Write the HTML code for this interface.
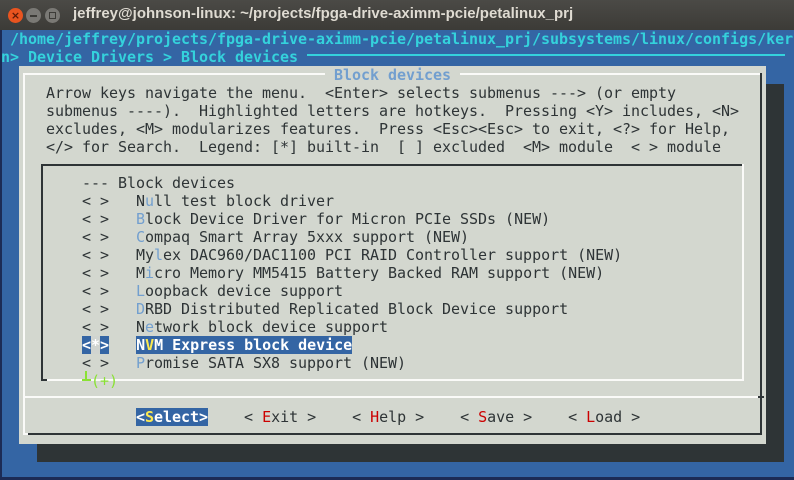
<!DOCTYPE html>
<html><head><meta charset="utf-8"><style>
*{margin:0;padding:0}
body{width:794px;height:480px;overflow:hidden;background:#3465a4;position:relative;font-family:"DejaVu Sans Mono","Liberation Mono",monospace;font-size:15px;}
.a{position:absolute}
.r{position:absolute;white-space:pre;line-height:18px;height:18px;letter-spacing:-0.03px;color:#2e3436}
.c{color:#34d2dc;font-weight:bold}
.h{color:#5c8fd0}
.hb{color:#729fcf}
.red{color:#cc0000}
.sel{background:#3465a4;color:#fff;font-weight:bold}
.y{color:#fce94f}
</style></head><body>
<!-- title bar -->
<div class="a" style="left:0;top:0;width:794px;height:30px;background:linear-gradient(#4b4a46,#3c3b37)"></div>
<div class="a" style="left:8px;top:8px;width:15px;height:15px;border-radius:50%;background:#e9541f;color:#5a1a08;font:bold 11px 'DejaVu Sans',sans-serif;text-align:center;line-height:15px">×</div>
<div class="a" style="left:26px;top:8px;width:15px;height:15px;border-radius:50%;background:#7a7975"><div class="a" style="left:4px;top:7px;width:7px;height:2px;background:#3c3b37"></div></div>
<div class="a" style="left:45px;top:8px;width:15px;height:15px;border-radius:50%;background:#7a7975"><div class="a" style="left:4px;top:4px;width:5px;height:5px;border:1px solid #3c3b37"></div></div>
<div class="a" style="left:73px;top:5px;color:#dfdbd2;font:bold 15px 'Liberation Sans',sans-serif;white-space:pre">jeffrey@johnson-linux: ~/projects/fpga-drive-aximm-pcie/petalinux_prj</div>
<!-- terminal frame -->
<div class="a" style="left:0;top:30px;width:2px;height:450px;background:#1c2b55"></div>
<div class="a" style="left:0;top:477px;width:794px;height:3px;background:#1c2b55"></div>
<!-- header rows -->
<div class="r c" style="left:1px;top:30px"> /home/jeffrey/projects/fpga-drive-aximm-pcie/petalinux_prj/subsystems/linux/configs/ker</div>
<div class="r c" style="left:1px;top:48px">n&gt; Device Drivers &gt; Block devices</div>
<div class="a" style="left:307px;top:54px;width:478px;height:2px;background:#34d2dc"></div>
<!-- shadow -->
<div class="a" style="left:37px;top:84px;width:747px;height:378px;background:#2e3436"></div>
<!-- dialog -->
<div class="a" style="left:19px;top:66px;width:747px;height:378px;background:#d3d7cf"></div>
<!-- outer border -->
<div class="a" style="left:23px;top:73px;width:739px;height:2px;background:#fafaf8"></div>
<div class="a" style="left:23px;top:73px;width:2px;height:362px;background:#fafaf8"></div>
<div class="a" style="left:760px;top:73px;width:2px;height:362px;background:#2e3436"></div>
<div class="a" style="left:28px;top:433px;width:734px;height:2px;background:#2e3436"></div>
<div class="a" style="left:23px;top:433px;width:5px;height:2px;background:#fafaf8"></div>
<div class="r" style="left:325px;top:66px;background:#d3d7cf;color:#729fcf;font-weight:bold"> Block devices </div>
<!-- help text -->
<div class="r" style="left:46px;top:84px">Arrow keys navigate the menu.  &lt;Enter&gt; selects submenus ---&gt; (or empty</div>
<div class="r" style="left:46px;top:102px">submenus ----).  Highlighted letters are hotkeys.  Pressing &lt;Y&gt; includes, &lt;N&gt;</div>
<div class="r" style="left:46px;top:120px">excludes, &lt;M&gt; modularizes features.  Press &lt;Esc&gt;&lt;Esc&gt; to exit, &lt;?&gt; for Help,</div>
<div class="r" style="left:46px;top:138px">&lt;/&gt; for Search.  Legend: [*] built-in  [ ] excluded  &lt;M&gt; module  &lt; &gt; module</div>
<!-- inner box -->
<div class="a" style="left:41px;top:164px;width:703px;height:2px;background:#2e3436"></div>
<div class="a" style="left:41px;top:164px;width:2px;height:217px;background:#2e3436"></div>
<div class="a" style="left:742px;top:164px;width:2px;height:217px;background:#fafaf8"></div>
<div class="a" style="left:47px;top:379px;width:697px;height:2px;background:#fafaf8"></div>
<div class="a" style="left:41px;top:379px;width:6px;height:2px;background:#2e3436"></div>
<!-- items -->
<div class="r" style="left:82px;top:174px">--- Block devices</div>
<div class="r" style="left:82px;top:192px">&lt; &gt;   N<span class="hb">u</span>ll test block driver</div>
<div class="r" style="left:82px;top:210px">&lt; &gt;   <span class="hb">B</span>lock Device Driver for Micron PCIe SSDs (NEW)</div>
<div class="r" style="left:82px;top:228px">&lt; &gt;   <span class="hb">C</span>ompaq Smart Array 5xxx support (NEW)</div>
<div class="r" style="left:82px;top:246px">&lt; &gt;   My<span class="hb">l</span>ex DAC960/DAC1100 PCI RAID Controller support (NEW)</div>
<div class="r" style="left:82px;top:264px">&lt; &gt;   M<span class="hb">i</span>cro Memory MM5415 Battery Backed RAM support (NEW)</div>
<div class="r" style="left:82px;top:282px">&lt; &gt;   <span class="hb">L</span>oopback device support</div>
<div class="r" style="left:82px;top:300px">&lt; &gt;   <span class="hb">D</span>RBD Distributed Replicated Block Device support</div>
<div class="r" style="left:82px;top:318px">&lt; &gt;   N<span class="hb">e</span>twork block device support</div>
<div class="r" style="left:82px;top:336px"><span class="sel">&lt;<span style="background:#d0d4d0;color:#fff">*</span>&gt;</span>   <span class="sel">N<span class="y">V</span>M Express block device</span></div>
<div class="r" style="left:82px;top:354px">&lt; &gt;   <span class="hb">P</span>romise SATA SX8 support (NEW)</div>
<!-- more indicator -->
<div class="a" style="left:82px;top:379px;width:9px;height:2px;background:#8ae234"></div>
<div class="a" style="left:85px;top:371px;width:2px;height:9px;background:#8ae234"></div>
<div class="r" style="left:91px;top:372px;color:#8ae234">(+)</div>
<!-- separator -->
<div class="a" style="left:23px;top:396px;width:739px;height:2px;background:#fafaf8"></div>
<div class="a" style="left:758px;top:396px;width:6px;height:2px;background:#2e3436"></div>
<!-- buttons -->
<div class="r" style="left:136px;top:408px"><span class="sel">&lt;<span class="y">S</span>elect&gt;</span>    &lt; <span class="red">E</span>xit &gt;    &lt; <span class="red">H</span>elp &gt;    &lt; <span class="red">S</span>ave &gt;    &lt; <span class="red">L</span>oad &gt;</div>
</body></html>
